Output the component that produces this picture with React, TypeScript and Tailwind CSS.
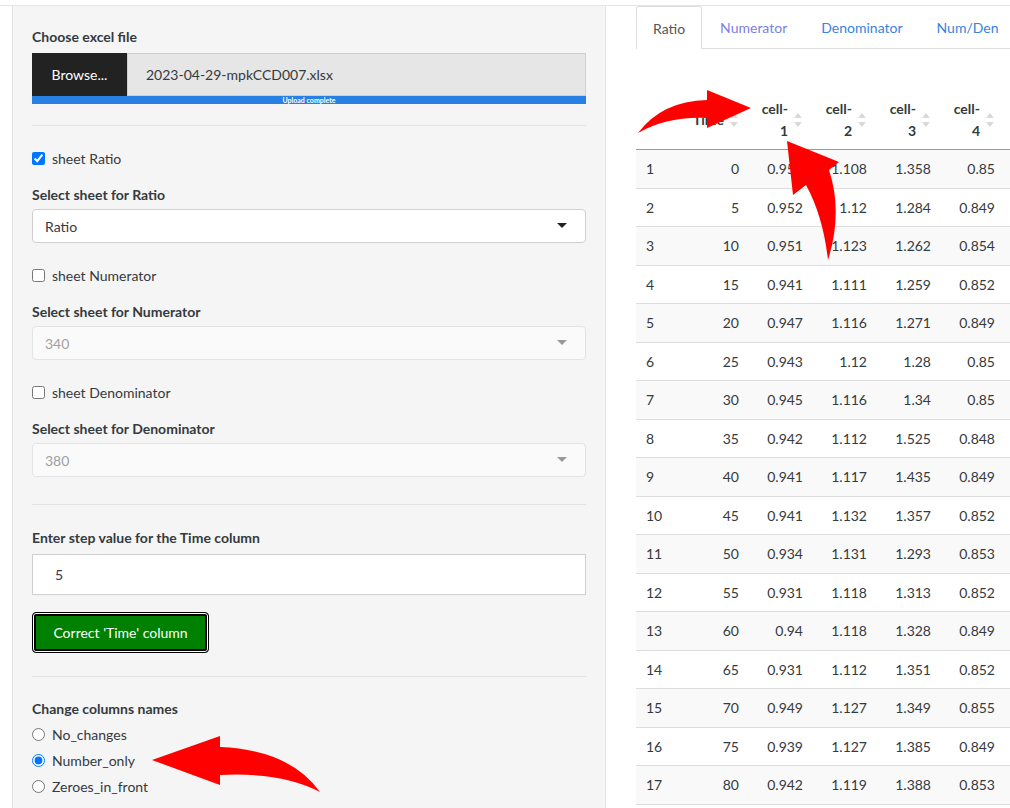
import React from "react";

const font = { fontFamily: "Lato, 'Noto Sans', sans-serif" };

const rows = [
  ["1", "0", "0.953", "1.108", "1.358", "0.85"],
  ["2", "5", "0.952", "1.12", "1.284", "0.849"],
  ["3", "10", "0.951", "1.123", "1.262", "0.854"],
  ["4", "15", "0.941", "1.111", "1.259", "0.852"],
  ["5", "20", "0.947", "1.116", "1.271", "0.849"],
  ["6", "25", "0.943", "1.12", "1.28", "0.85"],
  ["7", "30", "0.945", "1.116", "1.34", "0.85"],
  ["8", "35", "0.942", "1.112", "1.525", "0.848"],
  ["9", "40", "0.941", "1.117", "1.435", "0.849"],
  ["10", "45", "0.941", "1.132", "1.357", "0.852"],
  ["11", "50", "0.934", "1.131", "1.293", "0.853"],
  ["12", "55", "0.931", "1.118", "1.313", "0.852"],
  ["13", "60", "0.94", "1.118", "1.328", "0.849"],
  ["14", "65", "0.931", "1.112", "1.351", "0.852"],
  ["15", "70", "0.949", "1.127", "1.349", "0.855"],
  ["16", "75", "0.939", "1.127", "1.385", "0.849"],
  ["17", "80", "0.942", "1.119", "1.388", "0.853"],
];

const Caret = ({ color }: { color: string }) => (
  <svg width="10" height="6" viewBox="0 0 10 6">
    <polygon points="0,0 10,0 5,5" fill={color} />
  </svg>
);

const SortIcon = () => (
  <svg width="8" height="16" viewBox="0 0 8 16" className="shrink-0">
    <polygon points="0,6 4,1 8,6" fill="#d9d9d9" />
    <polygon points="0,10 4,15 8,10" fill="#d9d9d9" />
  </svg>
);

const Label = ({ children, className = "" }: { children: React.ReactNode; className?: string }) => (
  <div className={`h-5 flex items-center text-[14px] font-bold text-[#343a40] ${className}`}>{children}</div>
);

const Check = ({ label, checked, className = "" }: { label: string; checked?: boolean; className?: string }) => (
  <label className={`h-5 flex items-center gap-[7px] text-[14px] text-[#343a40] ${className}`}>
    <input type="checkbox" defaultChecked={checked} className="m-0 w-[13px] h-[13px]" />
    <span>{label}</span>
  </label>
);

const Select = ({ value, disabled }: { value: string; disabled?: boolean }) => (
  <div
    className={`mt-[5px] h-[34px] flex items-center justify-between pl-3 pr-[18px] rounded-[4px] border text-[14px] ${
      disabled ? "bg-[#fafafa] border-[#e3e3e3] text-[#a0a0a0]" : "bg-white border-[#cfcfcf] text-[#343a40]"
    }`}
  >
    <span>{value}</span>
    <Caret color={disabled ? "#9a9a9a" : "#222"} />
  </div>
);

const Radio = ({ label, checked }: { label: string; checked?: boolean }) => (
  <label className="h-[26px] flex items-center gap-[7px] text-[14px] text-[#343a40]">
    <input type="radio" name="colnames" defaultChecked={checked} className="m-0 w-[13px] h-[13px]" />
    <span>{label}</span>
  </label>
);

const Hr = ({ className = "" }: { className?: string }) => <div className={`border-t border-[#e2e2e2] ${className}`} />;

const cols = "grid grid-cols-[49px_64px_64px_64px_64px_64px]";

export default function App() {
  return (
    <div className="relative w-[1010px] h-[808px] overflow-hidden bg-white" style={font}>
      <div className="pt-[5px]">
        <div className="border-t border-[#e5e5e5]" />
        <div className="flex">
          {/* sidebar panel */}
          <div className="ml-3 w-[594px] h-[820px] bg-[#f5f5f5] border-x border-[#e3e3e3] px-[19px] pt-[20px] flex flex-col">
            <Label>Choose excel file</Label>
            <div className="mt-[7px] flex h-[43px]">
              <div className="w-[95px] bg-[#222] text-white text-[14px] flex items-center justify-center">Browse...</div>
              <div className="flex-1 bg-[#e6e6e6] border border-[#cfcfcf] flex items-center pl-[18px] text-[14px] text-[#343a40]">
                2023-04-29-mpkCCD007.xlsx
              </div>
            </div>
            <div className="h-2 bg-[#2780e3] text-white text-[7px] font-bold leading-[8px] text-center">Upload complete</div>
            <Hr className="mt-[21px]" />

            <Check label="sheet Ratio" checked className="mt-[22px]" />
            <Label className="mt-4">Select sheet for Ratio</Label>
            <Select value="Ratio" />

            <Check label="sheet Numerator" className="mt-[22px]" />
            <Label className="mt-4">Select sheet for Numerator</Label>
            <Select value="340" disabled />

            <Check label="sheet Denominator" className="mt-[22px]" />
            <Label className="mt-4">Select sheet for Denominator</Label>
            <Select value="380" disabled />

            <Hr className="mt-[27px]" />
            <Label className="mt-[22px]">Enter step value for the Time column</Label>
            <div className="mt-[7px] h-[41px] bg-white border border-[#cfcfcf] flex items-center pl-[22px] text-[14px] text-[#343a40]">
              5
            </div>
            <button className="mt-[17px] w-[177px] h-[41px] rounded-[4px] border border-black bg-[#008000] text-white text-[14px] shadow-[inset_0_0_0_1px_#fff,inset_0_0_0_3px_#000]">
              Correct 'Time' column
            </button>
            <Hr className="mt-[23px]" />
            <Label className="mt-[21px]">Change columns names</Label>
            <div className="mt-[3px] flex flex-col">
              <Radio label="No_changes" />
              <Radio label="Number_only" checked />
              <Radio label="Zeroes_in_front" />
            </div>
          </div>

          {/* main panel */}
          <div className="ml-[30px] flex-1 overflow-hidden">
            <div className="flex border-b border-[#dedede] h-[43px] text-[14px]">
              <div className="px-4 mr-[2px] h-[43px] flex items-center bg-white border border-b-0 border-[#dedede] rounded-t-[3px] text-[#555]">Ratio</div>
              <div className="px-4 mr-[2px] flex items-center text-[#7b7fe6]">Numerator</div>
              <div className="px-4 mr-[2px] flex items-center text-[#3683e0]">Denominator</div>
              <div className="px-4 mr-[2px] flex items-center text-[#3683e0] whitespace-nowrap">Num/Den</div>
            </div>

            <div className="mt-[41px] w-[400px] text-[14px] text-[#343a40]">
              <div className={`${cols} h-[60px] border-b border-[#9a9a9a] font-bold`}>
                <div />
                {["Time", "cell-\n1", "cell-\n2", "cell-\n3", "cell-\n4"].map((h) => (
                  <div key={h} className="flex items-center justify-end gap-[6px] pr-[11px]">
                    <span className="whitespace-pre text-right leading-[22px]">{h}</span>
                    <SortIcon />
                  </div>
                ))}
              </div>
              {rows.map((r, i) => (
                <div key={r[0]} className={`${cols} h-[38.5px] border-b border-[#dddddd] ${i % 2 === 0 ? "bg-[#f9f9f9]" : "bg-white"}`}>
                  {r.map((v, j) => (
                    <div key={j} className={`flex items-center ${j === 0 ? "pl-[10px]" : "justify-end pr-[10px]"}`}>
                      {v}
                    </div>
                  ))}
                </div>
              ))}
            </div>
          </div>
        </div>
      </div>

      {/* annotation arrows */}
      <svg className="absolute inset-0 pointer-events-none" width="1010" height="808" viewBox="0 0 1010 808">
        <path d="M638 133 Q662 101 707 100 L707 90 L751 108 L707 128 L707 118 Q668 116 638 133 Z" fill="#ff0000" />
        <path d="M787 141 L839 162 L829 170 Q843 212 828 260 Q823 216 806 185 L793 195 Z" fill="#ff0000" />
        <path d="M152 760 L220 736 L220 747 Q290 750 320 792 Q282 772 220 775 L220 785 Z" fill="#ff0000" />
      </svg>
    </div>
  );
}
